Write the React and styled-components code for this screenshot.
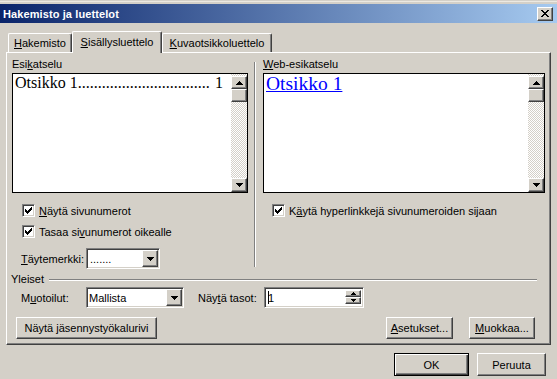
import React from "react";
import styled, { createGlobalStyle, css } from "styled-components";

const FACE = "#d4d0c8";
const SHADOW = "#808080";
const DARK = "#404040";

const GlobalStyle = createGlobalStyle`
  html, body { margin: 0; padding: 0; background: ${FACE}; }
  body { font-family: "Liberation Sans", Arial, sans-serif; font-size: 11px; color: #000; }
  * { box-sizing: border-box; }
`;

const raised = css`
  background: ${FACE};
  border: 1px solid;
  border-color: #fff ${DARK} ${DARK} #fff;
  box-shadow: inset -1px -1px 0 ${SHADOW};
`;

const sunken = css`
  background: #fff;
  border: 1px solid;
  border-color: ${SHADOW} #fff #fff ${SHADOW};
  box-shadow: inset 1px 1px 0 ${DARK}, inset -1px -1px 0 ${FACE};
`;

const Window = styled.div`
  width: 557px;
  height: 379px;
  background: ${FACE};
  display: flex;
  flex-direction: column;
  overflow: hidden;
`;

const FrameTop = styled.div`
  height: 4px;
  background: ${FACE};
  box-shadow: inset 0 -2px 0 ${FACE}, inset 0 -3px 0 #ece9e2;
`;

const TitleBar = styled.div`
  height: 19px;
  display: flex;
  align-items: center;
  justify-content: space-between;
  padding: 0 4px 0 3px;
  background: linear-gradient(to right, #0a246a, #a6caf0);
`;

const Title = styled.span`
  color: #fff;
  font-weight: bold;
  font-size: 11px;
  letter-spacing: 0.1px;
`;

const CloseButton = styled.div`
  ${raised};
  width: 16px;
  height: 14px;
  display: flex;
  align-items: center;
  justify-content: center;
`;

const TabRow = styled.div`
  display: flex;
  align-items: flex-end;
  height: 21px;
  margin-top: 8px;
  padding-left: 8px;
`;

const Tab = styled.div`
  position: relative;
  z-index: ${(p) => (p.$active ? 2 : 1)};
  width: ${(p) => p.$w}px;
  height: ${(p) => (p.$active ? 22 : 19)}px;
  margin-bottom: ${(p) => (p.$active ? -1 : 0)}px;
  padding-bottom: ${(p) => (p.$active ? 2 : 0)}px;
  background: ${FACE};
  border-top: 1px solid #fff;
  border-left: 1px solid #fff;
  border-right: 1px solid ${DARK};
  border-radius: 2px 2px 0 0;
  box-shadow: inset -1px 0 0 ${SHADOW};
  display: flex;
  align-items: center;
  justify-content: center;
  white-space: nowrap;
`;

const Panel = styled.div`
  margin-left: 6px;
  width: 545px;
  height: 293px;
  flex: none;
  border: 1px solid;
  border-color: #fff ${DARK} ${DARK} #fff;
  box-shadow: inset -1px -1px 0 ${SHADOW};
  padding: 5px 5px 0 5px;
  display: flex;
  flex-direction: column;
`;

const Columns = styled.div`
  display: grid;
  grid-template-columns: 236px 15px 282px;
`;

const Column = styled.div`
  display: flex;
  flex-direction: column;
`;

const Separator = styled.div`
  width: 2px;
  margin: 4px 0 2px 6px;
  border-left: 1px solid ${SHADOW};
  border-right: 1px solid #fff;
`;

const GroupLabel = styled.div`
  height: 13px;
  line-height: 13px;
  margin-bottom: 2px;
`;

const U = styled.span`
  text-decoration: underline;
`;

const PreviewBox = styled.div`
  height: 120px;
  border: 1px solid #000;
  display: flex;
  background: #fff;
`;

const PreviewContent = styled.div`
  flex: 1;
  min-width: 0;
  padding: 0 8px 0 2px;
  font-family: "Liberation Serif", "Times New Roman", serif;
`;

const TocLine = styled.div`
  display: flex;
  justify-content: space-between;
  font-size: 16px;
  line-height: 18px;
  white-space: nowrap;
`;

const WebLink = styled.a`
  color: #0000ff;
  text-decoration: underline;
  font-size: 19.5px;
  line-height: 22px;
  display: inline-block;
  margin-top: -1px;
`;

const ScrollBar = styled.div`
  width: 16px;
  flex: none;
  display: flex;
  flex-direction: column;
  padding-top: 2px;
  background: repeating-conic-gradient(#fff 0 25%, ${FACE} 0 50%) 0 0 / 2px 2px;
`;

const ScrollButton = styled.div`
  ${raised};
  height: ${(p) => p.$h}px;
  flex: none;
  display: flex;
  align-items: center;
  justify-content: center;
`;

const Track = styled.div`
  flex: 1;
`;

const CheckRow = styled.label`
  display: flex;
  align-items: center;
  gap: 4px;
  height: 13px;
  margin-top: ${(p) => p.$top}px;
  padding-left: ${(p) => p.$indent}px;
  white-space: nowrap;
`;

const CheckBox = styled.span`
  ${sunken};
  width: 13px;
  height: 13px;
  flex: none;
  display: flex;
  align-items: center;
  justify-content: center;
`;

const FieldRow = styled.div`
  display: flex;
  align-items: center;
  height: 21px;
  margin-top: ${(p) => p.$top}px;
  padding-left: ${(p) => p.$indent}px;
`;

const FieldLabel = styled.span`
  width: ${(p) => p.$w}px;
  margin-left: ${(p) => p.$ml || 0}px;
  flex: none;
  white-space: nowrap;
`;

const SelectBox = styled.div`
  ${sunken};
  width: ${(p) => p.$w}px;
  height: ${(p) => p.$h || 21}px;
  flex: none;
  padding: 1px;
  display: flex;
  align-items: stretch;
`;

const SelectValue = styled.div`
  flex: 1;
  display: flex;
  align-items: center;
  padding-left: ${(p) => p.$pl || 1}px;
  white-space: nowrap;
`;

const DropButton = styled.div`
  ${raised};
  width: 16px;
  flex: none;
  display: flex;
  align-items: center;
  justify-content: center;
`;

const Caret = styled.span`
  width: 1px;
  height: 13px;
  background: #000;
  margin: 0 -1px 0 1px;
`;

const SpinButtons = styled.div`
  width: 16px;
  flex: none;
  display: flex;
  flex-direction: column;
  margin: 1px 1px 1px 0;
`;

const SpinButton = styled.div`
  ${raised};
  height: 7px;
  display: flex;
  align-items: center;
  justify-content: center;
`;

const SectionHeader = styled.div`
  display: flex;
  align-items: center;
  gap: 5px;
  height: 13px;
  margin: 3px 8px 0 -1px;
`;

const SectionLine = styled.div`
  flex: 1;
  height: 2px;
  margin-top: 2px;
  border-top: 1px solid ${SHADOW};
  border-bottom: 1px solid #fff;
`;

const ButtonRow = styled.div`
  display: flex;
  align-items: center;
  margin-top: 9px;
  padding-left: 4px;
  padding-right: 10px;
`;

const ButtonGroup = styled.div`
  display: flex;
  gap: 16px;
  margin-left: auto;
`;

const Button = styled.div`
  width: ${(p) => p.$w}px;
  height: ${(p) => p.$h}px;
  flex: none;
  display: flex;
  align-items: center;
  justify-content: center;
  white-space: nowrap;
  background: ${FACE};
  border: 1px solid;
  ${(p) =>
    p.$default
      ? css`
          border-color: #000;
          box-shadow: inset 1px 1px 0 #fff, inset -1px -1px 0 ${DARK},
            inset -2px -2px 0 ${SHADOW};
        `
      : css`
          border-color: #fff ${DARK} ${DARK} #fff;
          box-shadow: inset -1px -1px 0 ${SHADOW};
        `}
`;

const Footer = styled.div`
  display: flex;
  justify-content: flex-end;
  gap: 8px;
  margin-top: 8px;
  padding-right: 11px;
`;

const CloseGlyph = () => (
  <svg width="8" height="7" viewBox="0 0 8 7" shapeRendering="crispEdges">
    <path d="M0 0h2v1H0zM6 0h2v1H6zM1 1h2v1H1zM5 1h2v1H5zM2 2h4v1H2zM3 3h2v1H3zM2 4h4v1H2zM1 5h2v1H1zM5 5h2v1H5zM0 6h2v1H0zM6 6h2v1H6z" fill="#000" />
  </svg>
);

const CheckMark = () => (
  <svg width="7" height="7" viewBox="0 0 7 7" shapeRendering="crispEdges">
    <path d="M0 2h1v3H0zM1 3h1v3H1zM2 4h1v3H2zM3 3h1v3H3zM4 2h1v3H4zM5 1h1v3H5zM6 0h1v3H6z" fill="#000" />
  </svg>
);

const ArrowDown = ({ small }) =>
  small ? (
    <svg width="5" height="3" viewBox="0 0 5 3" shapeRendering="crispEdges">
      <path d="M0 0h5v1H0zM1 1h3v1H1zM2 2h1v1H2z" fill="#000" />
    </svg>
  ) : (
    <svg width="7" height="4" viewBox="0 0 7 4" shapeRendering="crispEdges">
      <path d="M0 0h7v1H0zM1 1h5v1H1zM2 2h3v1H2zM3 3h1v1H3z" fill="#000" />
    </svg>
  );

const ArrowUp = ({ small }) =>
  small ? (
    <svg width="5" height="3" viewBox="0 0 5 3" shapeRendering="crispEdges">
      <path d="M2 0h1v1H2zM1 1h3v1H1zM0 2h5v1H0z" fill="#000" />
    </svg>
  ) : (
    <svg width="7" height="4" viewBox="0 0 7 4" shapeRendering="crispEdges">
      <path d="M3 0h1v1H3zM2 1h3v1H2zM1 2h5v1H1zM0 3h7v1H0z" fill="#000" />
    </svg>
  );

const VScroll = () => (
  <ScrollBar>
    <ScrollButton $h={13}>
      <ArrowUp />
    </ScrollButton>
    <ScrollButton $h={13} />
    <Track />
    <ScrollButton $h={14}>
      <ArrowDown />
    </ScrollButton>
  </ScrollBar>
);

const Check = ({ indent, top, children }) => (
  <CheckRow $indent={indent} $top={top}>
    <CheckBox>
      <CheckMark />
    </CheckBox>
    <span>{children}</span>
  </CheckRow>
);

const Select = ({ w, pl, children }) => (
  <SelectBox $w={w}>
    <SelectValue $pl={pl}>{children}</SelectValue>
    <DropButton>
      <ArrowDown />
    </DropButton>
  </SelectBox>
);

export default function App() {
  return (
    <>
      <GlobalStyle />
      <Window>
        <FrameTop />
        <TitleBar>
          <Title>Hakemisto ja luettelot</Title>
          <CloseButton>
            <CloseGlyph />
          </CloseButton>
        </TitleBar>

        <TabRow>
          <Tab $w={64}>
            <span>
              <U>H</U>akemisto
            </span>
          </Tab>
          <Tab $w={90} $active>
            <span>
              <U>S</U>isällysluettelo
            </span>
          </Tab>
          <Tab $w={110}>
            <span>
              <U>K</U>uvaotsikkoluettelo
            </span>
          </Tab>
        </TabRow>

        <Panel>
          <Columns>
            <Column>
              <GroupLabel>
                Esi<U>k</U>atselu
              </GroupLabel>
              <PreviewBox>
                <PreviewContent>
                  <TocLine>
                    <span>Otsikko 1{".".repeat(33)}</span>
                    <span>1</span>
                  </TocLine>
                </PreviewContent>
                <VScroll />
              </PreviewBox>
              <Check indent={10} top={11}>
                <U>N</U>äytä sivunumerot
              </Check>
              <Check indent={10} top={8}>
                Tasaa si<U>v</U>unumerot oikealle
              </Check>
              <FieldRow $indent={9} $top={10}>
                <FieldLabel $w={65}>
                  <U>T</U>äytemerkki:
                </FieldLabel>
                <Select w={74} pl={2}>
                  .......
                </Select>
              </FieldRow>
            </Column>

            <Separator />

            <Column>
              <GroupLabel>
                <U>W</U>eb-esikatselu
              </GroupLabel>
              <PreviewBox>
                <PreviewContent>
                  <WebLink>Otsikko 1</WebLink>
                </PreviewContent>
                <VScroll />
              </PreviewBox>
              <Check indent={9} top={11}>
                K<U>ä</U>ytä hyperlinkkejä sivunumeroiden sijaan
              </Check>
            </Column>
          </Columns>

          <SectionHeader>
            <span>Yleiset</span>
            <SectionLine />
          </SectionHeader>

          <FieldRow $indent={9} $top={2}>
            <FieldLabel $w={65}>
              M<U>u</U>otoilut:
            </FieldLabel>
            <Select w={98}>Mallista</Select>
            <FieldLabel $w={66} $ml={14}>
              Näy<U>t</U>ä tasot:
            </FieldLabel>
            <SelectBox $w={100}>
              <SelectValue>
                <Caret />
                1
              </SelectValue>
              <SpinButtons>
                <SpinButton>
                  <ArrowUp small />
                </SpinButton>
                <SpinButton>
                  <ArrowDown small />
                </SpinButton>
              </SpinButtons>
            </SelectBox>
          </FieldRow>

          <ButtonRow>
            <Button $w={141} $h={22}>
              <span>
                Näytä <U>j</U>äsennystyökalurivi
              </span>
            </Button>
            <ButtonGroup>
              <Button $w={67} $h={22}>
                <span>
                  <U>A</U>setukset...
                </span>
              </Button>
              <Button $w={66} $h={22}>
                <span>
                  <U>M</U>uokkaa...
                </span>
              </Button>
            </ButtonGroup>
          </ButtonRow>
        </Panel>

        <Footer>
          <Button $w={75} $h={23} $default>
            OK
          </Button>
          <Button $w={69} $h={23}>
            Peruuta
          </Button>
        </Footer>
      </Window>
    </>
  );
}
